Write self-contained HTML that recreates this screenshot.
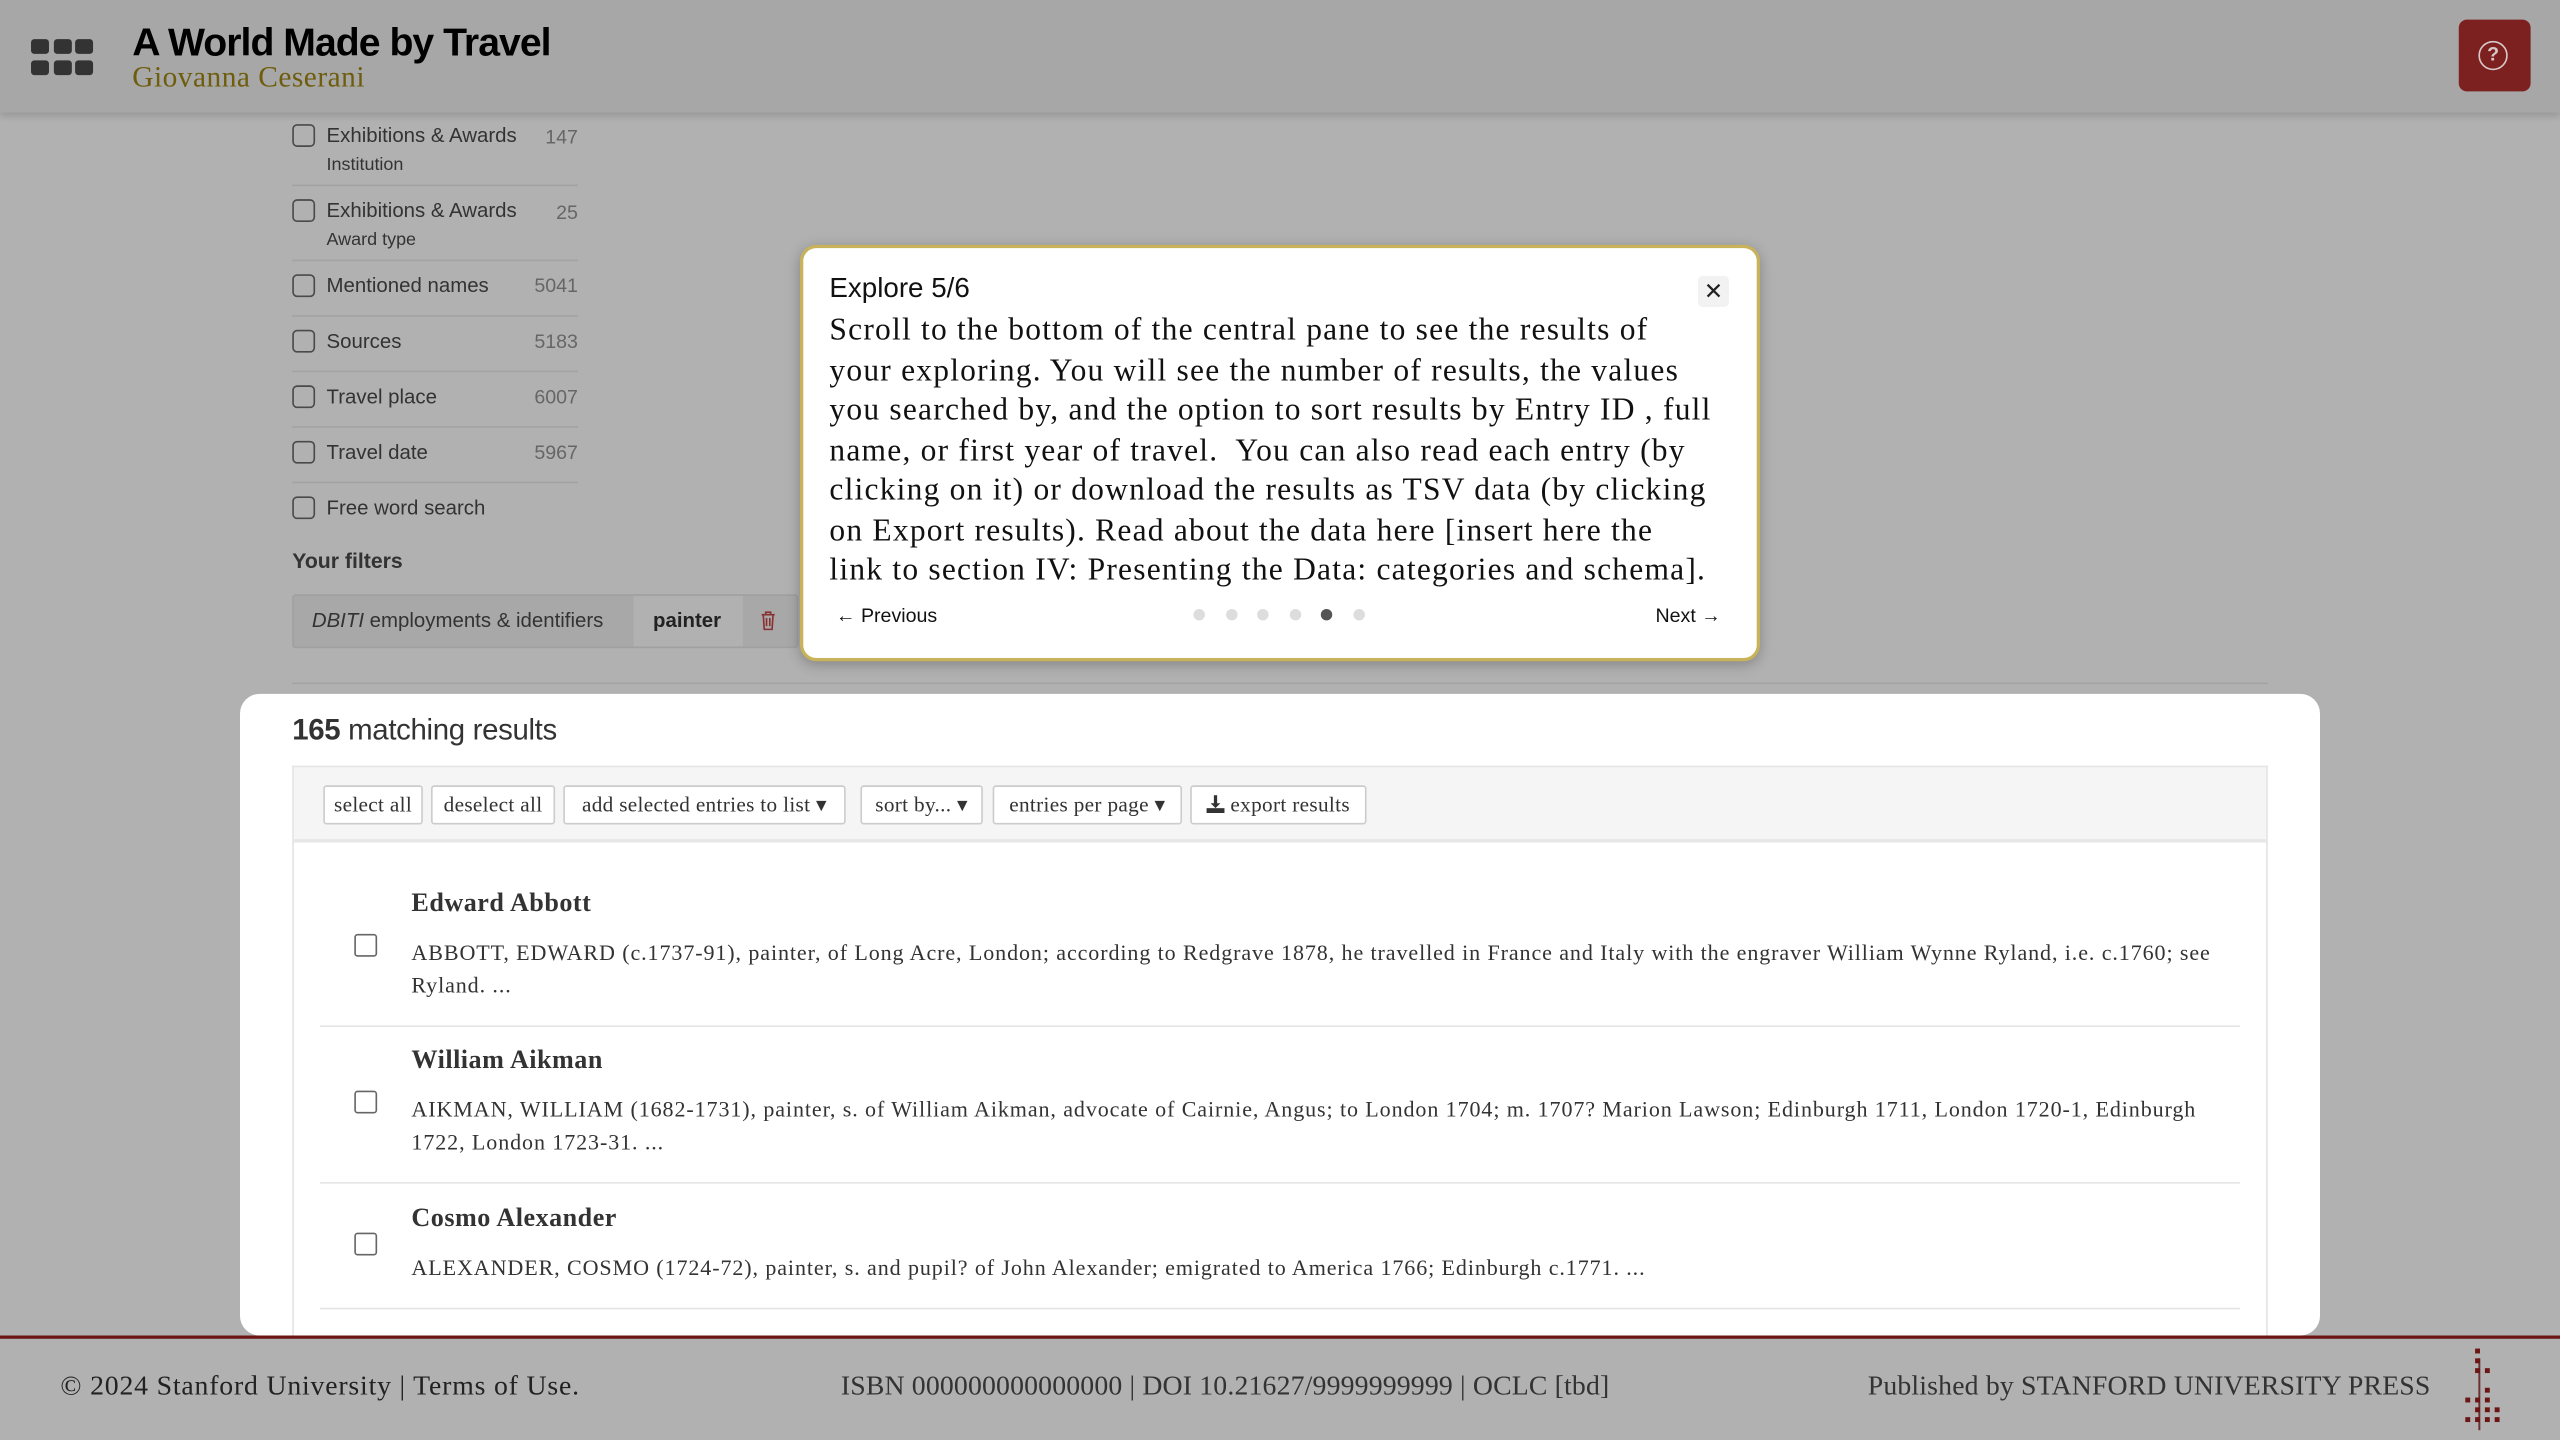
<!DOCTYPE html>
<html><head><meta charset="utf-8"><style>
*{box-sizing:border-box;margin:0;padding:0}
html,body{width:2560px;height:1440px;overflow:hidden;background:#b1b1b1}
#w{width:1568px;height:882px;transform:scale(1.632653);transform-origin:0 0;position:relative;font-family:"Liberation Sans",sans-serif;background:#b1b1b1}
.a{position:absolute}
.hdr{left:0;top:0;width:1568px;height:69px;background:#a7a7a7;box-shadow:0 2px 4px rgba(0,0,0,.15)}
.sq{position:absolute;width:11px;height:9px;background:#333;border-radius:2px}
.serif{font-family:"Liberation Serif",serif}
.cb{position:absolute;width:14px;height:14px;border:1.3px solid #4a4a4a;border-radius:3px}
.fl{font-size:12.5px;color:#333}
.num{font-size:12px;color:#666;text-align:right;width:60px}
.hr{height:1px;background:#a3a3a3;width:175px;left:179px}
.btn{position:absolute;top:481px;height:24px;border:1px solid #ccc;background:#fff;font-family:"Liberation Serif",serif;font-size:13px;color:#333;padding-top:3px;text-align:center;border-radius:2px;white-space:nowrap;letter-spacing:0.2px}
.nm{font-family:"Liberation Serif",serif;font-weight:bold;font-size:16px;color:#333;letter-spacing:0.3px}
.ds{font-family:"Liberation Serif",serif;font-size:13.5px;color:#333;line-height:20px;white-space:nowrap;letter-spacing:0.55px}
.rc{position:absolute;width:14px;height:14px;border:1.3px solid #666;border-radius:2px;left:217px}
.dot{position:absolute;top:373px;width:7px;height:7px;border-radius:50%;background:#ddd}
</style></head><body><div id="w">
<div class="a hdr"></div>
<div class="sq" style="left:19px;top:24px"></div><div class="sq" style="left:33px;top:24px"></div><div class="sq" style="left:46px;top:24px"></div>
<div class="sq" style="left:19px;top:37px"></div><div class="sq" style="left:33px;top:37px"></div><div class="sq" style="left:46px;top:37px"></div>
<div class="a" style="left:81px;top:13px;font-size:24px;color:#000;font-weight:bold;letter-spacing:-0.6px">A World Made by Travel</div>
<div class="a serif" style="left:81px;top:37px;font-size:18px;color:#6e5d0c;letter-spacing:0.3px">Giovanna Ceserani</div>
<div class="a" style="left:1506px;top:12px;width:44px;height:44px;background:#7d2020;border-radius:5px"></div>
<div class="a" style="left:1518px;top:25px;width:18px;height:18px;border:1.5px solid #d8c8c8;border-radius:50%;color:#d8c8c8;font-size:12px;text-align:center;line-height:15px;font-weight:bold">?</div>

<div class="cb" style="left:179px;top:76px"></div><div class="a fl" style="left:200px;top:76px">Exhibitions &amp; Awards</div><div class="a num" style="left:294px;top:77px">147</div>
<div class="a" style="left:200px;top:95px;font-size:11px;color:#333">Institution</div>
<div class="a hr" style="top:113px"></div>
<div class="cb" style="left:179px;top:122px"></div><div class="a fl" style="left:200px;top:122px">Exhibitions &amp; Awards</div><div class="a num" style="left:294px;top:123px">25</div>
<div class="a" style="left:200px;top:141px;font-size:11px;color:#333">Award type</div>
<div class="a hr" style="top:159px"></div>
<div class="cb" style="left:179px;top:168px"></div><div class="a fl" style="left:200px;top:168px">Mentioned names</div><div class="a num" style="left:294px;top:168px">5041</div>
<div class="a hr" style="top:193px"></div>
<div class="cb" style="left:179px;top:202px"></div><div class="a fl" style="left:200px;top:202px">Sources</div><div class="a num" style="left:294px;top:202px">5183</div>
<div class="a hr" style="top:227px"></div>
<div class="cb" style="left:179px;top:236px"></div><div class="a fl" style="left:200px;top:236px">Travel place</div><div class="a num" style="left:294px;top:236px">6007</div>
<div class="a hr" style="top:261px"></div>
<div class="cb" style="left:179px;top:270px"></div><div class="a fl" style="left:200px;top:270px">Travel date</div><div class="a num" style="left:294px;top:270px">5967</div>
<div class="a hr" style="top:295px"></div>
<div class="cb" style="left:179px;top:304px"></div><div class="a fl" style="left:200px;top:304px">Free word search</div>
<div class="a" style="left:179px;top:336px;font-size:13px;font-weight:bold;color:#333">Your filters</div>
<div class="a" style="left:179px;top:364px;width:310px;height:33px;border:1px solid #a0a0a0;border-radius:2px;background:#a8a8a8"></div>
<div class="a" style="left:388px;top:365px;width:67px;height:31px;background:#b1b1b1"></div>
<div class="a" style="left:191px;top:373px;font-size:12.5px;color:#333"><i>DBITI</i> employments &amp; identifiers</div>
<div class="a" style="left:400px;top:373px;font-size:12.5px;font-weight:bold;color:#222">painter</div>
<svg class="a" style="left:466px;top:374px" width="9" height="12" viewBox="0 0 9 12" fill="none" stroke="#8a3030" stroke-width="1"><path d="M0.5 2.5h8M3 2.5V1h3v1.5M1.5 2.5l.6 9h4.8l.6-9M3.5 4.5v5M5.5 4.5v5"/></svg>
<div class="a" style="left:179px;top:418px;width:1210px;height:1px;background:#a3a3a3"></div>

<div class="a" style="left:147px;top:425px;width:1274px;height:393px;background:#fff;border-radius:12px"></div>
<div class="a" style="left:179px;top:437px;font-size:18px;color:#333;letter-spacing:-0.2px"><b>165</b> matching results</div>
<div class="a" style="left:179px;top:469px;width:1210px;height:350px;border:1px solid #e3e3e3;border-bottom:none"></div>
<div class="a" style="left:180px;top:470px;width:1208px;height:46px;background:#f5f5f5;border-bottom:2px solid #e6e6e6"></div>
<div class="btn" style="left:198px;width:61px">select all</div>
<div class="btn" style="left:264px;width:76px">deselect all</div>
<div class="btn" style="left:345px;width:173px">add selected entries to list ▾</div>
<div class="btn" style="left:527px;width:75px">sort by... ▾</div>
<div class="btn" style="left:608px;width:116px">entries per page ▾</div>
<div class="btn" style="left:729px;width:108px"><svg width="11" height="11" viewBox="0 0 11 11" style="vertical-align:-1px" fill="#333"><path d="M4.5 0h2v5h2l-3 3-3-3h2z"/><rect x="0" y="8" width="11" height="3"/></svg> export results</div>

<div class="a nm" style="left:252px;top:545px">Edward Abbott</div>
<div class="rc" style="top:572px"></div>
<div class="a ds" style="left:252px;top:574px">ABBOTT, EDWARD (c.1737-91), painter, of Long Acre, London; according to Redgrave 1878, he travelled in France and Italy with the engraver William Wynne Ryland, i.e. c.1760; see<br>Ryland. ...</div>
<div class="a" style="left:196px;top:628px;width:1176px;height:1px;background:#e5e5e5"></div>
<div class="a nm" style="left:252px;top:641px">William Aikman</div>
<div class="rc" style="top:668px"></div>
<div class="a ds" style="left:252px;top:670px">AIKMAN, WILLIAM (1682-1731), painter, s. of William Aikman, advocate of Cairnie, Angus; to London 1704; m. 1707? Marion Lawson; Edinburgh 1711, London 1720-1, Edinburgh<br>1722, London 1723-31. ...</div>
<div class="a" style="left:196px;top:724px;width:1176px;height:1px;background:#e5e5e5"></div>
<div class="a nm" style="left:252px;top:738px">Cosmo Alexander</div>
<div class="rc" style="top:755px"></div>
<div class="a ds" style="left:252px;top:767px">ALEXANDER, COSMO (1724-72), painter, s. and pupil? of John Alexander; emigrated to America 1766; Edinburgh c.1771. ...</div>
<div class="a" style="left:196px;top:801px;width:1176px;height:1px;background:#e5e5e5"></div>

<div class="a" style="left:490px;top:150px;width:588px;height:255px;background:#fff;border:2px solid #c8b25a;border-radius:10px;box-shadow:0 2px 8px rgba(0,0,0,.25)"></div>
<div class="a" style="left:508px;top:167px;font-size:17px;color:#111">Explore 5/6</div>
<div class="a" style="left:1040px;top:169px;width:19px;height:19px;border-radius:3px;background:#f2f2f2;font-size:14px;text-align:center;line-height:19px;color:#222">✕</div>
<div class="a serif" style="left:508px;top:191px;font-size:19.3px;line-height:24.5px;color:#111;white-space:nowrap;letter-spacing:0.75px">Scroll to the bottom of the central pane to see the results of<br>your exploring. You will see the number of results, the values<br>you searched by, and the option to sort results by Entry ID , full<br>name, or first year of travel.&nbsp; You can also read each entry (by<br>clicking on it) or download the results as TSV data (by clicking<br>on Export results). Read about the data here [insert here the<br>link to section IV: Presenting the Data: categories and schema].</div>
<div class="a" style="left:512px;top:370px;font-size:12px;color:#111">← Previous</div>
<div class="a" style="left:1014px;top:370px;font-size:12px;color:#111">Next →</div>
<div class="dot" style="left:731px"></div><div class="dot" style="left:751px"></div><div class="dot" style="left:770px"></div><div class="dot" style="left:790px"></div><div class="dot" style="left:809px;background:#555"></div><div class="dot" style="left:829px"></div>

<div class="a" style="left:0;top:818px;width:1568px;height:2px;background:#6b1515"></div>
<div class="a serif" style="left:37px;top:839px;font-size:17px;color:#222;letter-spacing:0.5px">© 2024 Stanford University | Terms of Use.</div>
<div class="a serif" style="left:515px;top:839px;font-size:17px;color:#333;letter-spacing:0.1px">ISBN 000000000000000 | DOI 10.21627/9999999999 | OCLC [tbd]</div>
<div class="a serif" style="left:1144px;top:839px;font-size:17px;color:#333;letter-spacing:0.1px">Published by STANFORD UNIVERSITY PRESS</div>
<svg class="a" style="left:1505px;top:822px" width="30" height="56" viewBox="0 0 30 56" fill="#6b1515">
<rect x="13" y="10" width="1.2" height="44" fill="#6b3030"/>
<rect x="11" y="4" width="3" height="3"/><rect x="11" y="10" width="3" height="3"/><rect x="11" y="16" width="3" height="3"/><rect x="17" y="16" width="3" height="3"/>
<rect x="17" y="28" width="3" height="3"/><rect x="5" y="34" width="3" height="3"/><rect x="11" y="34" width="3" height="3"/><rect x="17" y="34" width="3" height="3"/>
<rect x="11" y="40" width="3" height="3"/><rect x="17" y="40" width="3" height="3"/><rect x="23" y="40" width="3" height="3"/>
<rect x="5" y="46" width="3" height="3"/><rect x="11" y="46" width="3" height="3"/><rect x="17" y="46" width="3" height="3"/><rect x="23" y="46" width="3" height="3"/>
</svg>
</div></body></html>
